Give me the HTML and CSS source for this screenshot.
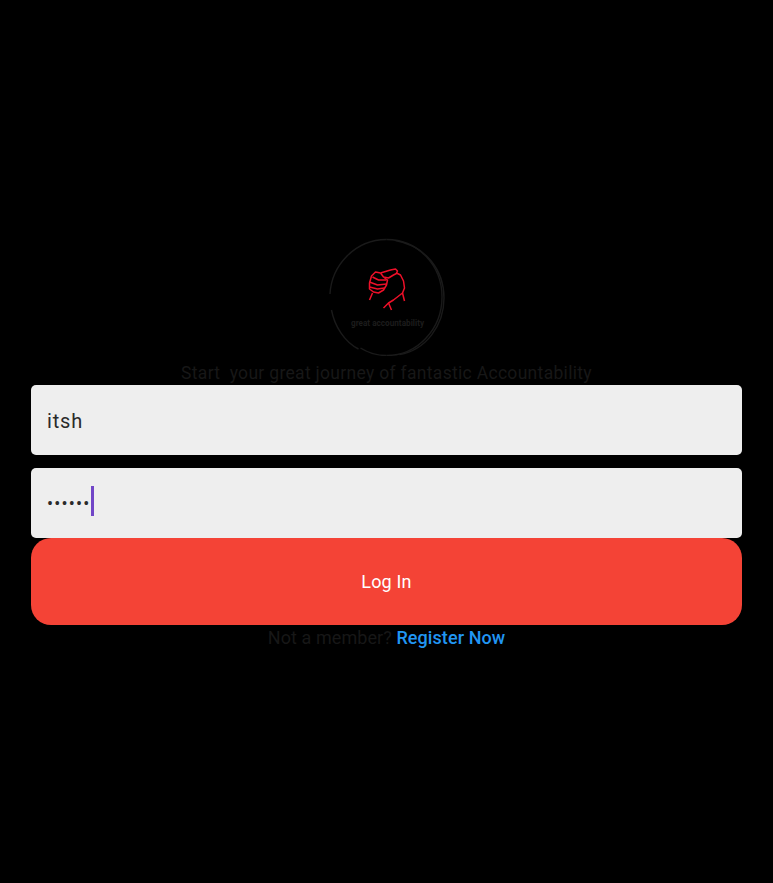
FILE: index.html
```html
<!DOCTYPE html>
<html lang="en">
<head>
    <meta charset="UTF-8">
    <title>Log In</title>
    <link rel="stylesheet" href="styles.css">
</head>
<body>
    <main class="login">
        <svg class="logo" viewBox="326.5 237 120 119" width="120" height="119" aria-hidden="true">
            <g class="ring">
                <path d="M386 239.5 C418 239.5 441.5 266 441.5 297 C441.5 329 417 355.5 386 355.5"/>
                <path d="M395 240.5 C425 246 443.5 270 443.5 298 C443.5 326 425 350 399 354.5"/>
                <path d="M386 239.5 C354 239.5 331 266 329.5 294"/>
                <path d="M331 310 C334 326 344 342 358 349"/>
                <path d="M386 355.5 C376 355.5 368 353 360 348"/>
            </g>
            <g class="hands">
                <path d="M380 273 L375 272 L371 276 L369 283 L369 289 L373 292 L378 293 L383 290 L386 285 L387 280 L384 278"/>
                <path d="M372 277 L378 280 L386 280"/>
                <path d="M369 282 L377 285 L386 284"/>
                <path d="M369 287 L377 289 L384 288"/>
                <path d="M380 273 L383 277 L388 278 L393 275 L397 273"/>
                <path d="M380 273 L390 270 L395 269 L397 271 L396 273 L400 275 L403 281 L404 288 L402 293 L393 300 L388 303 L383 308"/>
                <path d="M372 293 L369 300 M402 293 L404 301 M388 303 L391 310"/>
            </g>
            <text class="logo-text" x="387" y="326" text-anchor="middle">great accountability</text>
        </svg>

        <p class="tagline">Start&nbsp; your great journey of fantastic Accountability</p>

        <div class="field field-first">
            <span class="field-value">itsh</span>
        </div>
        <div class="field">
            <span class="field-dots">••••••</span><span class="caret"></span>
        </div>

        <button class="login-btn">Log In</button>

        <p class="register">Not a member? <a class="register-link" href="#">Register Now</a></p>
    </main>
</body>
</html>
```

FILE: styles.css
```css
* {
    box-sizing: border-box;
}
html, body {
    height: 100%;
}
body {
    margin: 0;
    background-color: #000;
    font-family: Roboto, "Liberation Sans", sans-serif;
}
.login {
    height: 100%;
    padding: 2px 31px 0;
    display: flex;
    flex-direction: column;
    align-items: center;
    justify-content: center;
}
.logo {
    display: block;
    flex: none;
}
.ring path {
    fill: none;
    stroke: #1a1a1a;
    stroke-width: 1.4;
}
.hands path {
    fill: none;
    stroke: #ee1029;
    stroke-width: 1.5;
    stroke-linejoin: round;
}
.logo-text {
    font-size: 8.2px;
    font-weight: 700;
    fill: #1c1c1c;
}
.tagline {
    margin: 7px 0 1px;
    font-size: 17.5px;
    line-height: 21px;
    letter-spacing: 0.31px;
    color: #171717;
}
.field {
    width: 100%;
    height: 70.5px;
    padding: 0 16px;
    display: flex;
    align-items: center;
    background-color: #eeeeee;
    border-radius: 5px;
    color: #2a2a2a;
}
.field-first {
    height: 70px;
    margin-bottom: 12.5px;
}
.field-value {
    padding-top: 2px;
    font-size: 20px;
    letter-spacing: 0.8px;
}
.field-dots {
    padding-top: 1px;
    font-size: 18px;
    letter-spacing: 1.2px;
}
.caret {
    width: 3px;
    height: 30px;
    margin: 0 0 3px 0;
    background-color: #7146c7;
}
.login-btn {
    width: 100%;
    height: 87px;
    border: none;
    border-radius: 20px;
    background-color: #f44336;
    color: #fff;
    font-family: inherit;
    font-size: 18px;
    letter-spacing: 0.15px;
}
.register {
    margin: 2px 0 0;
    font-size: 18px;
    line-height: 21px;
    letter-spacing: 0.08px;
    color: #171717;
}
.register-link {
    color: #2196f3;
    font-weight: 500;
    text-decoration: none;
}
```
